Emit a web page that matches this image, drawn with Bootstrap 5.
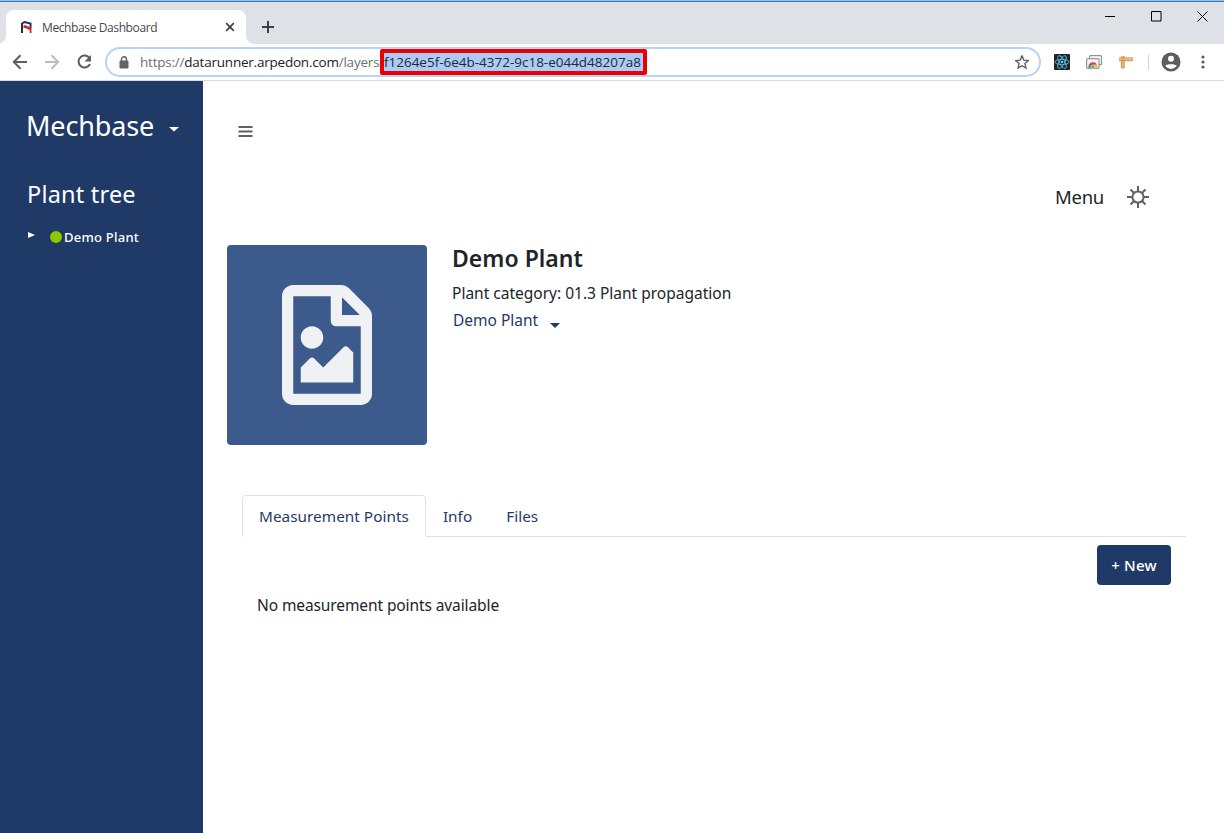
<!DOCTYPE html>
<html lang="en">
<head>
<meta charset="utf-8">
<title>Mechbase Dashboard</title>
<link href="https://cdn.jsdelivr.net/npm/bootstrap@5.3.0/dist/css/bootstrap.min.css" rel="stylesheet">
<style>
html,body{height:833px;overflow:hidden}
body{font-family:"Noto Sans","Open Sans",sans-serif;color:#212529;font-size:16px;background:#fff}
svg{display:block;flex:none}
.topline{height:2px;background:#1883d7;border-top:1px solid #b9b9b9}
.tabstrip{height:42px;background:#dee1e6}
.browser-tab{width:240px;height:34px;margin:8px 0 0 6px;background:#fff;border-radius:8px 8px 0 0;padding:0 10px 0 14px;font:12px "Open Sans",sans-serif;color:#45484c;position:relative}
.browser-tab::before,.browser-tab::after{content:"";position:absolute;bottom:0;width:8px;height:8px}
.browser-tab::before{left:-8px;background:radial-gradient(circle at 0 0,#dee1e6 7.5px,#fff 8px)}
.browser-tab::after{right:-8px;background:radial-gradient(circle at 100% 0,#dee1e6 7.5px,#fff 8px)}
.tab-title{margin-left:10px;letter-spacing:-.39px}
.window-buttons{margin:9px 16px 0 0;gap:35px}
.toolbar{height:37px;border-bottom:1px solid #d9dadd;background:#fff}
.omnibox{width:936px;height:30px;border:2px solid #b6d3f9;border-radius:15px;font:13.500px/18px "Open Sans",sans-serif;color:#6b6f74;margin-left:12px;padding:0 10px 0 12px}
.host{color:#202124}
.address{width:240px;margin-left:11px;letter-spacing:-.22px}
.picked{border:4px solid #e60000;border-radius:2px;height:26px;width:267px;background:#accbf8;color:#26292d;letter-spacing:-.01px;position:relative}
.workspace{height:752px}
.sidebar{width:203px;background:#1f3a66;color:#fff;padding:26px 0 0 26px}
.brand-name{font-size:27px;height:38px;letter-spacing:-.16px}
.tree-title{margin:31px 0 0 1px;height:36px;line-height:36px;font-size:23.500px;letter-spacing:.2px}
.tree-row{height:20px;margin-top:15px;font-size:13px;font-weight:500;letter-spacing:.24px}
.dot{width:12px;height:12px;background:#90c800}
.navy,.nav-tabs .nav-link,.nav-tabs .nav-link.active,.nav-tabs .nav-link:hover{color:#1f3a66}
.menu-row{margin:44px 75px 0 0;height:32px;font-size:18.500px;letter-spacing:-.3px}
.picture{width:200px;height:200px;background:#3c5a8b;border-radius:4px}
.plant-name{height:27px;line-height:27px;font-size:23px;font-weight:600;letter-spacing:.02px}
.plant-text{height:24px;line-height:24px;font-size:15.500px}
.nav-tabs{margin:50px 38px 0 39px;height:42px;border-color:#dee2e6}
.nav-tabs .nav-link{padding:8px 16px;height:42px;line-height:25px;border-radius:4px 4px 0 0;font-size:15.300px;letter-spacing:.04px}
.btn-new{background:#1f3a66;color:#fff;width:74px;height:40px;border-radius:4px;padding:0;font-size:15px;font-weight:500;letter-spacing:.2px}
.t{white-space:nowrap;display:inline-block}
</style>
</head>
<body>
<div class="topline"></div>
<header class="tabstrip d-flex">
  <div class="browser-tab d-flex align-items-center">
    <svg width="12" height="14" viewBox="0 0 12 14"><path d="M2 13V3.500L4.500 2 10.500 3.500V8" fill="none" stroke="#1f2f5c" stroke-width="2"/><path d="M3.500 5.500C6 4.500 8.500 7 11.500 8V13H9.700V10C7.500 9.500 6 7.500 3.500 8Z" fill="#d8232f"/></svg>
    <span class="t tab-title">Mechbase Dashboard</span>
    <svg class="ms-auto" width="12" height="12" viewBox="0 0 12 12" stroke="#3c4043" stroke-width="1.700"><path d="M2.200 2.200l7.600 7.600M9.800 2.200l-7.600 7.600"/></svg>
  </div>
  <svg width="12" height="12" viewBox="0 0 12 12" stroke="#3c4043" stroke-width="2" style="margin:19px 0 0 16px"><path d="M6 0v12M0 6h12"/></svg>
  <div class="window-buttons ms-auto d-flex">
    <svg width="11" height="11" viewBox="0 0 11 11"><path d="M0 5.500h10" stroke="#000"/></svg>
    <svg width="11" height="11" viewBox="0 0 11 11"><path d="M.5.5h9.500v9.500H.5Z" fill="none" stroke="#000"/></svg>
    <svg width="11" height="11" viewBox="0 0 11 11"><path d="M.5.5l10 10M10.500.5l-10 10" stroke="#000"/></svg>
  </div>
</header>
<div class="toolbar d-flex align-items-center">
  <svg style="margin-left:12px" width="16" height="16" viewBox="0 0 16 16" fill="none" stroke="#5a5d61" stroke-width="2"><path d="M15 8H2M8.500 1.300 1.800 8l6.700 6.700"/></svg>
  <svg style="margin-left:16px" width="16" height="16" viewBox="0 0 16 16" fill="none" stroke="#bbbdbf" stroke-width="2"><path d="M1 8h13M7.500 1.300 14.200 8l-6.700 6.700"/></svg>
  <svg style="margin-left:16px" width="17" height="16" viewBox="0 0 17 16"><path d="M13.600 4.300A6 6 0 1 0 14 10" fill="none" stroke="#5a5d61" stroke-width="2"/><path d="M15 1v6.500H8.500Z" fill="#5a5d61"/></svg>
  <div class="omnibox d-flex align-items-center">
    <svg width="10" height="13" viewBox="0 0 10 13"><path d="M2.500 5V3.300a2.500 2.500 0 0 1 5 0V5" fill="none" stroke="#5f6368" stroke-width="1.400"/><rect x=".5" y="4.500" width="9" height="8" rx="1" fill="#5f6368"/></svg>
    <span class="t address">https://<span class="host">datarunner.arpedon.com</span>/layers/</span>
    <span class="picked"><span class="t">f1264e5f-6e4b-4372-9c18-e044d48207a8</span></span>
    <svg class="ms-auto" width="14" height="14" viewBox="0 0 24 24"><path d="M12 1.500l3.100 7.300 7.900.7-6 5.200 1.800 7.700L12 18.300l-6.800 4.100L7 14.700 1 9.500l7.900-.7Z" fill="none" stroke="#5a5d61" stroke-width="2.300"/></svg>
  </div>
  <svg style="margin-left:13px" width="16" height="16" viewBox="0 0 16 16"><rect width="16" height="16" rx="1" fill="#20232a"/><g fill="none" stroke="#57bcd9" stroke-width=".9"><ellipse cx="8" cy="8" rx="7" ry="2.700"/><ellipse cx="8" cy="8" rx="7" ry="2.700" transform="rotate(60 8 8)"/><ellipse cx="8" cy="8" rx="7" ry="2.700" transform="rotate(120 8 8)"/></g><circle cx="8" cy="8" r="1.300" fill="#61dafb"/></svg>
  <svg style="margin-left:16px" width="16" height="14" viewBox="0 0 16 14"><rect x="3.500" y=".7" width="12" height="9" rx="1" fill="#fff" stroke="#8f9296" stroke-width="1.200"/><rect x=".6" y="3.600" width="12.500" height="9.800" rx="1" fill="#f4f4f4" stroke="#96999c" stroke-width="1.200"/><path d="M2.300 12.800a4.600 4.600 0 0 1 2-4.500L7 12.800Z" fill="#34a853"/><path d="M3 9.500a4.600 4.600 0 0 1 8 0L7 11Z" fill="#e53b30"/><path d="M11 9.500a4.600 4.600 0 0 1 .6 3.300H7L8 9.500Z" fill="#fbc116"/><circle cx="7" cy="11.700" r="1.700" fill="#4285f4" stroke="#fff" stroke-width=".6"/></svg>
  <svg style="margin-left:17px" width="15" height="14" viewBox="0 0 15 14"><path d="M0 2h14v4H0Z" fill="#e9b888"/><path d="M2 1h4v12.500H2Z" fill="#e7ad73"/><path d="M0 5.700h14M2.400 6v7" stroke="#c98c52" stroke-width=".8"/><circle cx="4" cy="3" r=".8" fill="#c98c52"/></svg>
  <i style="width:1px;height:16px;background:#d0d2d5;margin-left:14px"></i>
  <svg style="margin-left:12px" width="20" height="20" viewBox="0 0 20 20"><circle cx="10" cy="10" r="9.500" fill="#5a5d61"/><circle cx="10" cy="6.800" r="3" fill="#fff"/><path d="M4.200 13.800C5 11.600 15 11.600 15.800 13.800a7 7 0 0 1-11.600 0Z" fill="#fff"/></svg>
  <svg style="margin-left:20px" width="4" height="14" viewBox="0 0 4 14" fill="#5a5d61"><circle cx="2" cy="2" r="1.600"/><circle cx="2" cy="7" r="1.600"/><circle cx="2" cy="12" r="1.600"/></svg>
</div>
<div class="workspace d-flex">
  <aside class="sidebar flex-shrink-0">
    <div class="brand-name d-flex align-items-center"><span class="t">Mechbase</span>
      <svg style="margin:6px 0 0 15px" width="10" height="5" viewBox="0 0 10 5"><path d="M0 0h10L5 4.500Z" fill="#fff"/></svg></div>
    <div class="tree-title"><span class="t">Plant tree</span></div>
    <div class="tree-row d-flex align-items-center">
      <svg style="margin:-4px 14px 0 2px" width="8" height="6" viewBox="0 0 8 6"><path d="M0 0l7 3L0 6Z" fill="#fff"/></svg>
      <span class="dot rounded-circle"></span><span class="t" style="margin:1px 0 0 2px">Demo Plant</span></div>
  </aside>
  <main class="flex-grow-1">
    <svg style="margin:45px 0 0 35px" width="15" height="11" viewBox="0 0 15 11"><path d="M.5 1h14M.5 5.500h14M.5 10h14" stroke="#606060" stroke-width="2"/></svg>
    <div class="menu-row d-flex justify-content-end align-items-center"><span class="t">Menu</span>
      <svg style="margin-left:23px" width="22" height="22" viewBox="0 0 22 22" fill="none" stroke="#606060" stroke-width="2"><circle cx="11" cy="11" r="5.600"/><path d="M11 0v5M11 17v5M0 11h5M17 11h5M3.500 3.500l3.300 3.300M15.200 15.200l3.300 3.300M3.500 18.500l3.300-3.300M15.200 6.800l3.300-3.300"/></svg></div>
    <section class="d-flex" style="margin:32px 0 0 24px">
      <div class="picture d-flex align-items-center justify-content-center">
        <svg width="90" height="120" viewBox="0 0 384 512" fill="#f0f1f5"><path d="M369.900 98 286 14.100c-9-9-21.200-14.100-33.900-14.100H48C21.500 0 0 21.500 0 48v416c0 26.500 21.500 48 48 48h288c26.500 0 48-21.500 48-48V131.900c0-12.700-5.100-24.900-14.100-33.900zM332.100 128H256V51.900zM48 464V48h160v104c0 13.300 10.700 24 24 24h104v288zm32-48h224V288l-23.500-23.500c-4.700-4.700-12.300-4.700-17 0L176 352l-39.500-39.500c-4.700-4.700-12.300-4.700-17 0L80 352zm48-240c-26.500 0-48 21.500-48 48s21.500 48 48 48 48-21.500 48-48-21.500-48-48-48z"/></svg>
      </div>
      <div style="margin-left:25px">
        <div class="plant-name"><span class="t">Demo Plant</span></div>
        <div class="plant-text" style="margin-top:9px"><span class="t">Plant category: 01.3 Plant propagation</span></div>
        <div class="plant-text navy d-flex align-items-center" style="margin:3px 0 0 1px"><span class="t">Demo Plant</span><svg style="margin:11px 0 0 12px" width="10" height="5" viewBox="0 0 10 5"><path d="M0 0h10L5 5Z" fill="#1f3a66"/></svg></div>
      </div>
    </section>
    <ul class="nav nav-tabs">
      <li class="nav-item"><a class="nav-link active" href="#"><span class="t">Measurement Points</span></a></li>
      <li class="nav-item"><a class="nav-link" href="#"><span class="t">Info</span></a></li>
      <li class="nav-item"><a class="nav-link" href="#"><span class="t">Files</span></a></li>
    </ul>
    <div class="d-flex justify-content-end" style="margin:8px 53px 0 0"><button class="btn btn-new"><span class="t">+ New</span></button></div>
    <div class="plant-text" style="margin:8px 0 0 54px;letter-spacing:-.1px"><span class="t">No measurement points available</span></div>
  </main>
</div>
<script src="https://cdn.jsdelivr.net/npm/bootstrap@5.3.0/dist/js/bootstrap.bundle.min.js"></script>
</body>
</html>
